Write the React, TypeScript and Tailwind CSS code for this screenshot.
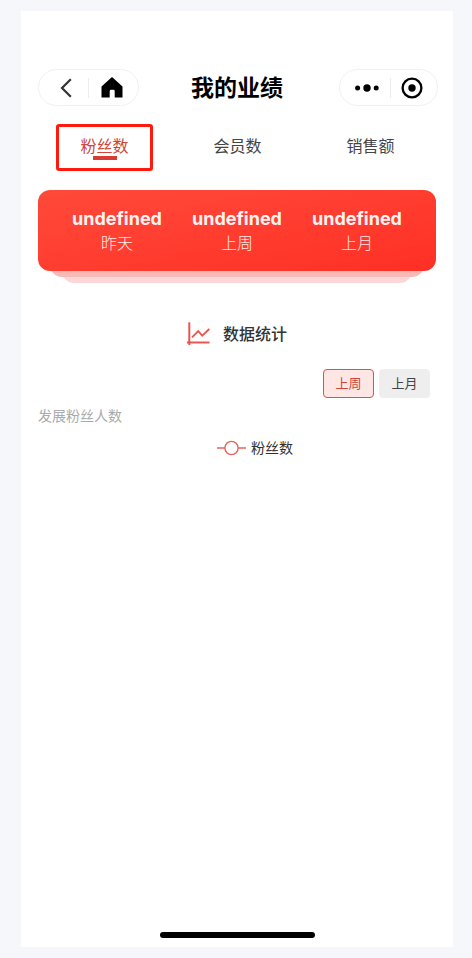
import { useState } from 'react';

const tabs = ['粉丝数', '会员数', '销售额'];

const summary = [
  { label: '昨天', value: undefined },
  { label: '上周', value: undefined },
  { label: '上月', value: undefined },
];

const ranges = ['上周', '上月'];

const NavBar = () => {
  return (
    <header className="flex h-[37px] items-center justify-between">
      <div className="flex h-[37px] w-[101px] items-center rounded-full border border-[#f1f1f1]">
        <button aria-label="返回" className="flex w-[49px] justify-center pl-1">
          <svg width="12" height="20" viewBox="0 0 12 20" fill="none" stroke="#333" strokeWidth="2.2">
            <path d="M10.8 1.2 2 10l8.8 8.8" />
          </svg>
        </button>
        <span className="h-5 w-px bg-[#ececec]" />
        <button aria-label="首页" className="flex flex-1 justify-center pr-1">
          <svg width="22" height="21" viewBox="0 0 22 21" fill="#000">
            <path d="M11 0 21.5 9.4V20.5H13.7V14.2Q13.7 12.8 12.4 12.8H10Q8.7 12.8 8.7 14.2V20.5H.5V9.4Z" />
          </svg>
        </button>
      </div>
      <h1 className="pr-1 text-[23px] leading-8 font-bold text-black">我的业绩</h1>
      <div className="flex h-[37px] w-[99px] items-center rounded-full border border-[#f1f1f1]">
        <button aria-label="更多" className="flex w-[50px] justify-center pl-1">
          <svg width="24" height="8" viewBox="0 0 24 8" fill="#000">
            <circle cx="2.6" cy="4" r="2.5" />
            <circle cx="12" cy="4" r="3.7" />
            <circle cx="21.2" cy="4" r="2.5" />
          </svg>
        </button>
        <span className="h-5 w-px bg-[#ececec]" />
        <button aria-label="关闭" className="flex flex-1 justify-center pr-1">
          <svg width="22" height="22" viewBox="0 0 22 22">
            <circle cx="11" cy="11" r="9.4" fill="none" stroke="#000" strokeWidth="2.3" />
            <circle cx="11" cy="11" r="3.7" fill="#000" />
          </svg>
        </button>
      </div>
    </header>
  );
};

const App = () => {
  const [tab, setTab] = useState(0);
  const [range, setRange] = useState(0);

  return (
    <div className="min-h-screen bg-[#f6f7fa] pt-[11px] pr-[19px] pb-[11px] pl-[21px] font-['Inter','Noto_Sans_CJK_SC',sans-serif]">
      <div className="flex min-h-[calc(100vh-22px)] flex-col bg-white pt-[58px] pr-[15px] pb-[9px] pl-[17px]">
        <NavBar />

        {/* Tabs */}
        <nav className="mt-[18px] mr-px grid grid-cols-3 justify-items-center">
          {tabs.map((name, index) => (
            <button
              key={name}
              onClick={() => setTab(index)}
              className={`flex h-[47px] w-[97px] flex-col items-center rounded-[3px] border-3 pt-[7px] text-base leading-6 ${
                tab === index ? 'border-[#ff1a10] text-[#d0443c]' : 'border-transparent text-[#444]'
              }`}
            >
              {name}
              <span className={`-mt-[2px] h-1 w-6 ${tab === index ? 'bg-[#d63c33]' : ''}`} />
            </button>
          ))}
        </nav>

        {/* Summary card */}
        <section className="mt-[19px] mr-[2px]">
          <div className="relative z-10 grid h-[81px] grid-cols-3 content-center rounded-xl bg-linear-to-br from-[#ff4939] to-[#ff2f25] px-[19px] pt-px text-center">
            {summary.map((item) => (
              <div key={item.label}>
                <p className="text-lg leading-6 font-bold text-[#fff4f2]">{String(item.value)}</p>
                <p className="text-base leading-6 font-light text-[#ffeae7]">{item.label}</p>
              </div>
            ))}
          </div>
          {/* Stacked sheets under the card */}
          <div className="relative z-5 mx-3 -mt-[18px] h-6 rounded-b-xl bg-[#f9b9b7]" />
          <div className="mx-6 -mt-[18px] h-6 rounded-b-xl bg-[#fbd8d7]" />
        </section>

        {/* Statistics */}
        <section className="mt-[39px] mr-[2px]">
          <h2 className="flex items-center justify-center gap-3 text-base leading-6 font-medium text-[#333]">
            <svg width="24" height="24" viewBox="0 0 24 24" fill="none" stroke="#e5574d">
              <path d="M2.3.3V23" strokeWidth="2" />
              <path d="M0 20.5H22.5" strokeWidth="2" />
              <path d="M5 15.3 11.2 9 15.2 13.7 22.3 7" strokeWidth="1.8" />
            </svg>
            数据统计
          </h2>
          <div className="mt-[23px] mr-[6px] flex justify-end gap-[5px]">
            {ranges.map((name, index) => (
              <button
                key={name}
                onClick={() => setRange(index)}
                className={`h-[29px] w-[51px] rounded-[4px] border pb-px text-[13px] leading-5 ${
                  range === index
                    ? 'border-[#d8544c] bg-[#fde6e4] text-[#d0443c]'
                    : 'border-[#eee] bg-[#eee] text-[#444]'
                }`}
              >
                {name}
              </button>
            ))}
          </div>
          <p className="mt-2 text-sm leading-5 text-[#aaa]">发展粉丝人数</p>
          <div className="mt-3 flex items-center justify-center gap-[5px] pl-9 text-sm leading-5 text-[#333]">
            <svg width="29" height="16" viewBox="0 0 29 16" fill="none" stroke="#e5655c" strokeWidth="1.4">
              <path d="M0 8H8M21 8H29" />
              <circle cx="14.5" cy="8" r="6.6" />
            </svg>
            {tabs[tab]}
          </div>
        </section>

        <div className="mt-auto mr-[2px] h-[6px] w-[155px] self-center rounded-full bg-black" />
      </div>
    </div>
  );
};

export default App;
